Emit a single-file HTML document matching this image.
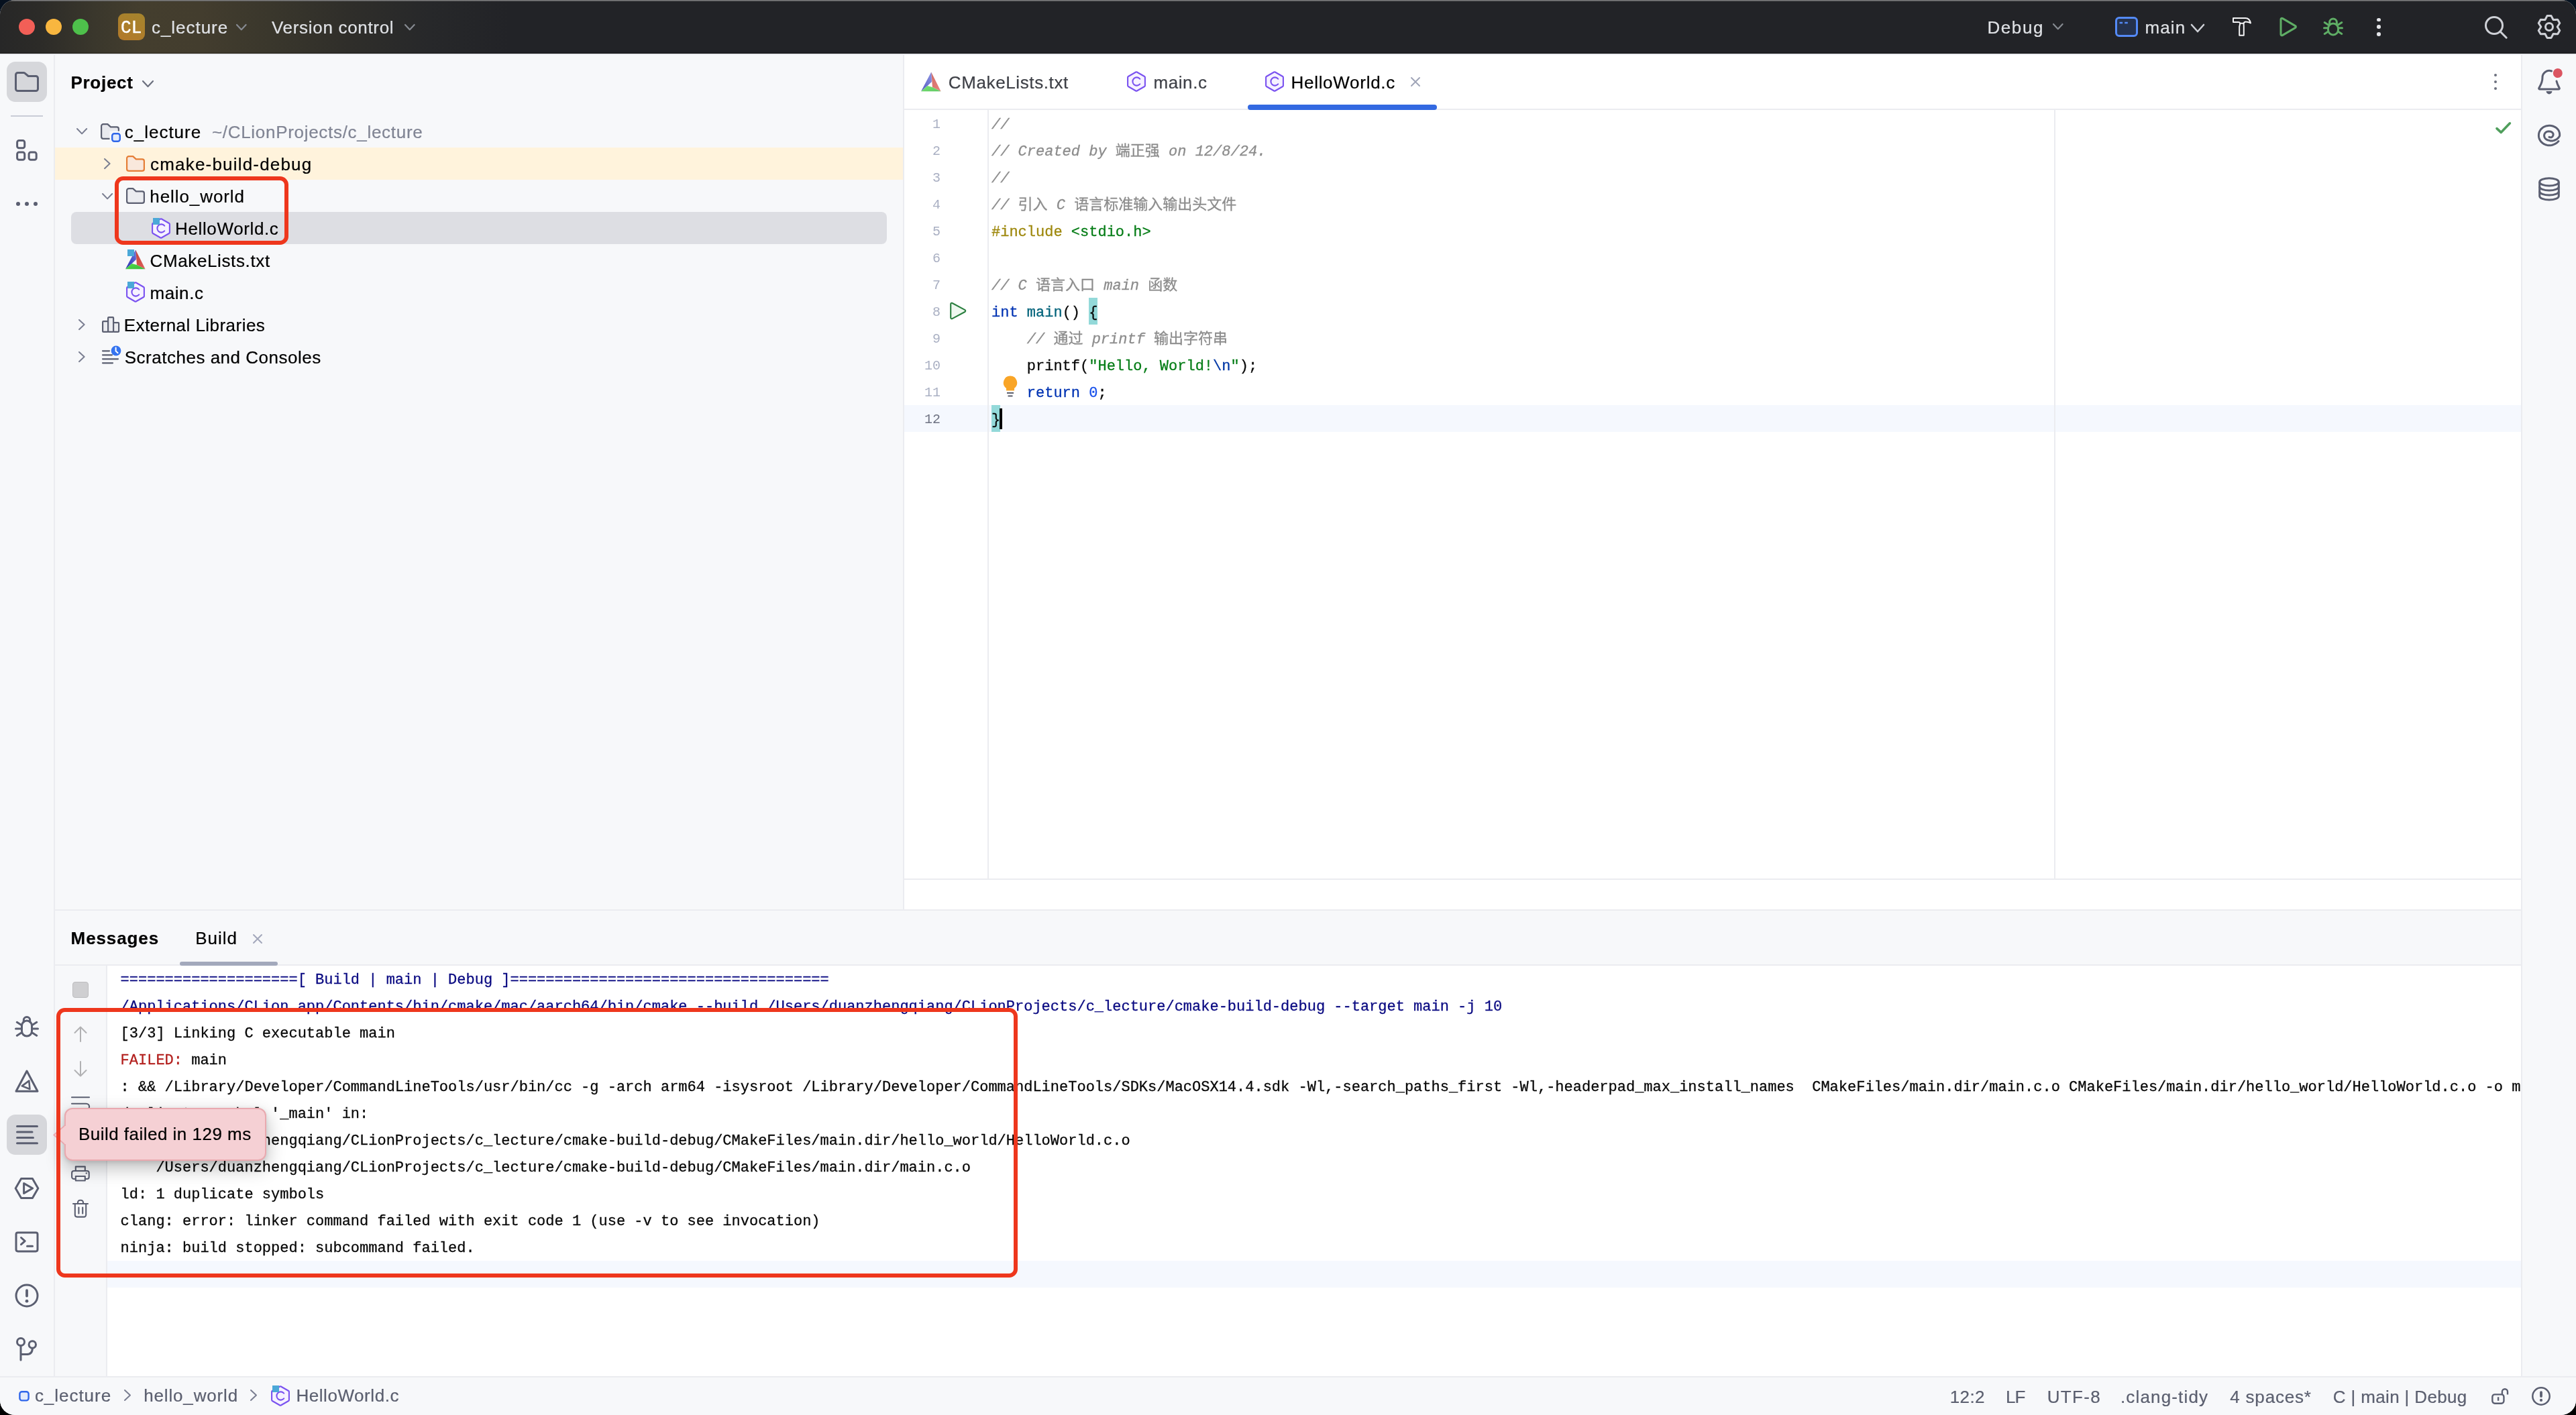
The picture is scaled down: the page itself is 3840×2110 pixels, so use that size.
<!DOCTYPE html>
<html lang="zh"><head><meta charset="utf-8"><title>c_lecture – HelloWorld.c</title>
<style>
html,body{margin:0;padding:0}
body{width:3840px;height:2110px;overflow:hidden;position:relative;background:linear-gradient(#06111f 0,#06111f 50%,#000 50%,#000 100%);font-family:"Liberation Sans","Noto Sans CJK SC",sans-serif}
#win{will-change:transform;position:absolute;left:0;top:0;width:3840px;height:2110px;border-radius:22px;overflow:hidden;background:#f7f8fa}
#win div,#win svg,#win span.t{position:absolute}
span.t{white-space:pre;line-height:1;-webkit-text-stroke:0.22px}
span.t.m,.m{-webkit-text-stroke:0.3px;font-family:"Liberation Mono","Noto Sans CJK SC",monospace;font-size:22px;white-space:pre;line-height:1}
.cj{font-family:"Noto Sans CJK SC","Liberation Mono",monospace;font-style:normal;line-height:0}
i.c{color:#8c8c8c}
</style></head><body><div id="win">
<svg width="0" height="0" style="left:0;top:0"><defs><linearGradient id="cmB" x1="0" y1="1" x2="1" y2="0"><stop offset="0" stop-color="#2a2cb0"/><stop offset="1" stop-color="#6a76dc"/></linearGradient><linearGradient id="cmR" x1="0" y1="0" x2="1" y2="1"><stop offset="0" stop-color="#c2453e"/><stop offset="1" stop-color="#e2605a"/></linearGradient><linearGradient id="cmG" x1="0" y1="0" x2="1" y2="1"><stop offset="0" stop-color="#52e04a"/><stop offset="1" stop-color="#36b83a"/></linearGradient></defs></svg>
<div style="left:0px;top:0px;width:3840px;height:80px;background:linear-gradient(90deg,#272727 0,#2c2b28 60px,#3a372c 140px,#443e2e 210px,#433d2e 300px,#3a372c 400px,#2f2e2a 520px,#27282a 640px,#222327 760px,#222327 100%);"></div>
<div style="left:0px;top:0px;width:3840px;height:2px;background:linear-gradient(#9a9a9a,#4a4a4c);opacity:.9"></div>
<div style="left:0px;top:78px;width:3840px;height:2px;background:linear-gradient(rgba(0,0,0,0),rgba(0,0,0,.35));"></div>
<div style="left:0px;top:80px;width:3840px;height:2px;background:#ebecf0;"></div>
<div style="left:28px;top:28px;width:24px;height:24px;background:#f25f57;border-radius:50%"></div>
<div style="left:68px;top:28px;width:24px;height:24px;background:#f8b63f;border-radius:50%"></div>
<div style="left:108px;top:28px;width:24px;height:24px;background:#4ec04b;border-radius:50%"></div>
<div style="left:176px;top:20px;width:40px;height:40px;background:linear-gradient(200deg,#a4842d,#b3792a);border-radius:9px"></div>
<span class="t" style="left:179.6px;top:28.3px;font-family:'Liberation Mono',monospace;font-size:28px;color:#fff;-webkit-text-stroke:0.4px #fff;transform:scaleX(.93);transform-origin:0 0">CL</span>
<span class="t " style="left:226.00px;top:27.79px;font-size:26px;color:#dfe1e5;letter-spacing:0.953px;">c_lecture</span>
<svg style="left:351.2px;top:34.699999999999996px;" width="17.6" height="11.2" viewBox="0 0 17.6 11.2" fill="none"><path d="M2 2 L8.8 9.2 L15.6 2" stroke="#868a91" stroke-width="2.2" stroke-linecap="round" stroke-linejoin="round"/></svg>
<span class="t " style="left:405.00px;top:27.79px;font-size:26px;color:#dfe1e5;letter-spacing:0.688px;">Version control</span>
<svg style="left:601.5px;top:34.699999999999996px;" width="17.6" height="11.2" viewBox="0 0 17.6 11.2" fill="none"><path d="M2 2 L8.8 9.2 L15.6 2" stroke="#868a91" stroke-width="2.2" stroke-linecap="round" stroke-linejoin="round"/></svg>
<span class="t " style="left:2962.38px;top:27.79px;font-size:26px;color:#dfe1e5;letter-spacing:1.606px;">Debug</span>
<svg style="left:3059.3999999999996px;top:34.4px;" width="17.6" height="11.2" viewBox="0 0 17.6 11.2" fill="none"><path d="M2 2 L8.8 9.2 L15.6 2" stroke="#868a91" stroke-width="2.2" stroke-linecap="round" stroke-linejoin="round"/></svg>
<svg style="left:3153px;top:25px;" width="34" height="30" viewBox="0 0 34 30" fill="none"><rect x="1.5" y="1.5" width="31" height="27" rx="4.5" fill="#25324d" stroke="#548af7" stroke-width="3"/><path d="M6.5 9 h4.6 M14.2 9 h4.6" stroke="#548af7" stroke-width="2.4"/></svg>
<span class="t " style="left:3197.38px;top:27.79px;font-size:26px;color:#dfe1e5;letter-spacing:1.125px;">main</span>
<svg style="left:3265.3px;top:35.0px;" width="22" height="14" viewBox="0 0 22 14" fill="none"><path d="M2 2 L11.0 12 L20 2" stroke="#ced0d6" stroke-width="2.6" stroke-linecap="round" stroke-linejoin="round"/></svg>
<svg style="left:3322px;top:20px;" width="40" height="40" viewBox="0 0 40 40" fill="none"><g stroke="#f4f4f6" stroke-width="2" stroke-linejoin="round" stroke-linecap="round"><path d="M7 7 H25.5 C29.8 7 32 10.2 33 14.4 C30.6 12.8 28.6 12.5 25.6 12.5 C24 12.5 23 13.4 22.6 14.8 H17.4 C17 13.6 16 13 14.6 13 C13 13 12.4 12.9 11 12.9 H7 Z"/><path d="M17.4 14.8 L16.2 19.8 V32.7 H22.8 V19.8 L22.6 14.8"/></g></svg>
<svg style="left:3390px;top:20px;" width="40" height="40" viewBox="0 0 40 40" fill="none"><path d="M10 8.8 a1.6 1.6 0 0 1 2.4 -1.4 l19.2 11.2 a1.6 1.6 0 0 1 0 2.8 l-19.2 11.2 a1.6 1.6 0 0 1 -2.4 -1.4 z" stroke="#5fad65" stroke-width="3" stroke-linejoin="round"/></svg>
<svg style="left:3458px;top:20px;" width="40" height="40" viewBox="0 0 40 40" fill="none"><g stroke="#5fad65" stroke-width="3" stroke-linecap="round"><path d="M12.5 24.5 v-2 a7.5 7.5 0 0 1 15 0 v2 a7.5 7.5 0 0 1 -15 0 z"/><path d="M14.6 16 v-2.6 a5.4 5.4 0 0 1 10.8 0 v2.6"/><path d="M6.5 21.8 h5.5 M28 21.8 h5.5 M7.2 13.6 l5 3.2 M32.8 13.6 l-5 3.2 M7.2 30.4 l5 -3.2 M32.8 30.4 l-5 -3.2"/></g></svg>
<div style="left:3543.2px;top:26.5px;width:5.6px;height:5.6px;background:#e4e5e9;border-radius:50%"></div>
<div style="left:3543.2px;top:37.2px;width:5.6px;height:5.6px;background:#e4e5e9;border-radius:50%"></div>
<div style="left:3543.2px;top:48.0px;width:5.6px;height:5.6px;background:#e4e5e9;border-radius:50%"></div>
<svg style="left:3700px;top:20px;" width="40" height="40" viewBox="0 0 40 40" fill="none"><circle cx="18" cy="18" r="12.5" stroke="#ced0d6" stroke-width="3"/><path d="M27 27 l9.2 9.2" stroke="#ced0d6" stroke-width="3" stroke-linecap="round"/></svg>
<svg style="left:3780px;top:20px;" width="40" height="40" viewBox="0 0 40 40" fill="none"><path d="M16.96 3.58 L23.04 3.58 L26.10 9.43 L32.70 9.15 L35.74 14.43 L32.20 20.00 L35.74 25.57 L32.70 30.85 L26.10 30.57 L23.04 36.42 L16.96 36.42 L13.90 30.57 L7.30 30.85 L4.26 25.57 L7.80 20.00 L4.26 14.43 L7.30 9.15 L13.90 9.43Z" stroke="#ced0d6" stroke-width="3" stroke-linejoin="round"/><circle cx="20" cy="20" r="5.5" stroke="#ced0d6" stroke-width="3"/></svg>
<div style="left:80px;top:82px;width:2px;height:1970px;background:#ebecf0;"></div>
<div style="left:1346px;top:82px;width:2px;height:1274px;background:#ebecf0;"></div>
<span class="t " style="left:105.38px;top:109.59px;font-size:26px;color:#000;letter-spacing:0.742px;font-weight:bold;">Project</span>
<svg style="left:210.5px;top:118.5px;" width="19" height="12" viewBox="0 0 19 12" fill="none"><path d="M2 2 L9.5 10 L17 2" stroke="#6c707e" stroke-width="2.2" stroke-linecap="round" stroke-linejoin="round"/></svg>
<div style="left:82px;top:220px;width:1264px;height:48px;background:#fff3dc;"></div>
<div style="left:106px;top:316px;width:1216px;height:48px;background:#dddee3;border-radius:8px"></div>
<svg style="left:112.9px;top:190.3px;" width="18.2" height="11.4" viewBox="0 0 18.2 11.4" fill="none"><path d="M2 2 L9.1 9.4 L16.2 2" stroke="#7a7e91" stroke-width="2" stroke-linecap="round" stroke-linejoin="round"/></svg>
<svg style="left:150px;top:184px;" width="32" height="30" viewBox="0 0 32 30" fill="none"><path d="M1.1 4 a2.9 2.9 0 0 1 2.9 -2.9 h6.4 l4.6 4.3 h9 a2.9 2.9 0 0 1 2.9 2.9 v11.7 a2.9 2.9 0 0 1 -2.9 2.9 h-20 a2.9 2.9 0 0 1 -2.9 -2.9 z" fill="#e8e9ee" stroke="#5b5f71" stroke-width="2.2" stroke-linejoin="round"/><rect x="13.5" y="11.5" width="19" height="19" fill="#f7f8fa"/><rect x="17.2" y="15.2" width="11.6" height="11.6" rx="3.2" fill="#e3ebfb" stroke="#2f66ea" stroke-width="2.4"/></svg>
<span class="t " style="left:185.80px;top:183.69px;font-size:26px;color:#000;letter-spacing:0.978px;">c_lecture</span>
<span class="t " style="left:315.88px;top:183.69px;font-size:26px;color:#818594;letter-spacing:0.702px;">~/CLionProjects/c_lecture</span>
<svg style="left:153.79999999999998px;top:235.0px;" width="11.6" height="18.2" viewBox="0 0 11.6 18.2" fill="none"><path d="M2 2 L9.6 9.1 L2 16.2" stroke="#7a7e91" stroke-width="2" stroke-linecap="round" stroke-linejoin="round"/></svg>
<svg style="left:188px;top:232px;" width="28" height="24" viewBox="0 0 28 24" fill="none"><path d="M1.1 4 a2.9 2.9 0 0 1 2.9 -2.9 h6.2 l4.6 4.3 h9.2 a2.9 2.9 0 0 1 2.9 2.9 v11.7 a2.9 2.9 0 0 1 -2.9 2.9 h-20 a2.9 2.9 0 0 1 -2.9 -2.9 z" fill="#f9e8dc" stroke="#e57e36" stroke-width="2.2" stroke-linejoin="round"/></svg>
<span class="t " style="left:224.00px;top:231.69px;font-size:26px;color:#000;letter-spacing:1.194px;">cmake-build-debug</span>
<svg style="left:150.9px;top:286.5px;" width="18.2" height="11.4" viewBox="0 0 18.2 11.4" fill="none"><path d="M2 2 L9.1 9.4 L16.2 2" stroke="#7a7e91" stroke-width="2" stroke-linecap="round" stroke-linejoin="round"/></svg>
<svg style="left:188px;top:280px;" width="28" height="24" viewBox="0 0 28 24" fill="none"><path d="M1.1 4 a2.9 2.9 0 0 1 2.9 -2.9 h6.2 l4.6 4.3 h9.2 a2.9 2.9 0 0 1 2.9 2.9 v11.7 a2.9 2.9 0 0 1 -2.9 2.9 h-20 a2.9 2.9 0 0 1 -2.9 -2.9 z" fill="#ebecf0" stroke="#5b5f71" stroke-width="2.2" stroke-linejoin="round"/></svg>
<span class="t " style="left:223.25px;top:279.69px;font-size:26px;color:#000;letter-spacing:0.925px;">hello_world</span>
<svg style="left:225.5px;top:324.5px;" width="28" height="31" viewBox="0 0 28 31" fill="none"><path d="M13.2 1.5 a1.6 1.6 0 0 1 1.6 0 L26.1 8 a1.6 1.6 0 0 1 .8 1.4 V21.6 a1.6 1.6 0 0 1 -.8 1.4 L14.8 29.5 a1.6 1.6 0 0 1 -1.6 0 L1.9 23 a1.6 1.6 0 0 1 -.8 -1.4 V9.4 a1.6 1.6 0 0 1 .8 -1.4 Z" fill="#f6f2ff" stroke="#7a52f0" stroke-width="2.1" stroke-linejoin="round"/><path d="M19.2 11.6 a6.1 6.1 0 1 0 0 7.8" stroke="#7a52f0" stroke-width="2.1" stroke-linecap="round"/><rect x="2" y="0" width="10" height="10" fill="#4ba8d8"/></svg>
<span class="t " style="left:261.07px;top:327.69px;font-size:26px;color:#000;letter-spacing:0.625px;">HelloWorld.c</span>
<svg style="left:187px;top:372.3px;" width="30" height="30" viewBox="0 0 30 30" fill="none"><path d="M15 0.7 L0 29.2 L9.6 20.9 L15.9 14.9 L15.7 1.5 Z" fill="url(#cmB)"/><path d="M15.3 0.7 L29.6 29.2 L16.9 23.1 L15.9 8 Z" fill="url(#cmR)"/><path d="M0 29.3 L29.6 29.3 L16.9 23.1 L9.6 20.9 Z" fill="url(#cmG)"/><rect x="3" y="0" width="10" height="10" fill="#4ba8d8"/></svg>
<span class="t " style="left:223.55px;top:375.69px;font-size:26px;color:#000;letter-spacing:0.621px;">CMakeLists.txt</span>
<svg style="left:188px;top:420.4px;" width="28" height="31" viewBox="0 0 28 31" fill="none"><path d="M13.2 1.5 a1.6 1.6 0 0 1 1.6 0 L26.1 8 a1.6 1.6 0 0 1 .8 1.4 V21.6 a1.6 1.6 0 0 1 -.8 1.4 L14.8 29.5 a1.6 1.6 0 0 1 -1.6 0 L1.9 23 a1.6 1.6 0 0 1 -.8 -1.4 V9.4 a1.6 1.6 0 0 1 .8 -1.4 Z" fill="#f6f2ff" stroke="#7a52f0" stroke-width="2.1" stroke-linejoin="round"/><path d="M19.2 11.6 a6.1 6.1 0 1 0 0 7.8" stroke="#7a52f0" stroke-width="2.1" stroke-linecap="round"/><rect x="2" y="0" width="10" height="10" fill="#4ba8d8"/></svg>
<span class="t " style="left:223.38px;top:423.69px;font-size:26px;color:#000;letter-spacing:0.605px;">main.c</span>
<svg style="left:115.60000000000001px;top:474.9px;" width="11.6" height="18.2" viewBox="0 0 11.6 18.2" fill="none"><path d="M2 2 L9.6 9.1 L2 16.2" stroke="#7a7e91" stroke-width="2" stroke-linecap="round" stroke-linejoin="round"/></svg>
<svg style="left:150px;top:470px;" width="30" height="28" viewBox="0 0 30 28" fill="none"><g stroke="#5b5f71" stroke-width="2.2" stroke-linejoin="round" fill="#ebecf0"><rect x="3.1" y="9.1" width="8" height="15.8" rx="1"/><rect x="11.1" y="3.1" width="8" height="21.8" rx="1"/><rect x="19.1" y="11.1" width="8" height="13.8" rx="1"/></g></svg>
<span class="t " style="left:184.68px;top:471.69px;font-size:26px;color:#000;letter-spacing:0.460px;">External Libraries</span>
<svg style="left:115.60000000000001px;top:522.9px;" width="11.6" height="18.2" viewBox="0 0 11.6 18.2" fill="none"><path d="M2 2 L9.6 9.1 L2 16.2" stroke="#7a7e91" stroke-width="2" stroke-linecap="round" stroke-linejoin="round"/></svg>
<svg style="left:150px;top:514px;" width="32" height="30" viewBox="0 0 32 30" fill="none"><g stroke="#5b5f71" stroke-width="2.2" stroke-linecap="round"><path d="M3 9.3 h10 M3 15.3 h14 M3 21.3 h23 M3 27.3 h15"/></g><circle cx="23" cy="9" r="7.4" fill="#3574f0"/><path d="M22.6 4.6 v5 l3 2.6" stroke="#fff" stroke-width="2" stroke-linecap="round" stroke-linejoin="round"/></svg>
<span class="t " style="left:185.68px;top:519.69px;font-size:26px;color:#000;letter-spacing:0.515px;">Scratches and Consoles</span>
<div style="left:1348px;top:82px;width:2411px;height:1274px;background:#fff;"></div>
<div style="left:1348px;top:162px;width:2411px;height:2px;background:#ebecf0;"></div>
<svg style="left:1373.2px;top:106.8px;opacity:.78;" width="30" height="30" viewBox="0 0 30 30" fill="none"><path d="M15 0.7 L0 29.2 L9.6 20.9 L15.9 14.9 L15.7 1.5 Z" fill="url(#cmB)"/><path d="M15.3 0.7 L29.6 29.2 L16.9 23.1 L15.9 8 Z" fill="url(#cmR)"/><path d="M0 29.3 L29.6 29.3 L16.9 23.1 L9.6 20.9 Z" fill="url(#cmG)"/></svg>
<span class="t " style="left:1413.75px;top:109.59px;font-size:26px;color:#3e4047;letter-spacing:0.621px;">CMakeLists.txt</span>
<svg style="left:1680px;top:106.3px;" width="28" height="31" viewBox="0 0 28 31" fill="none"><path d="M13.2 1.5 a1.6 1.6 0 0 1 1.6 0 L26.1 8 a1.6 1.6 0 0 1 .8 1.4 V21.6 a1.6 1.6 0 0 1 -.8 1.4 L14.8 29.5 a1.6 1.6 0 0 1 -1.6 0 L1.9 23 a1.6 1.6 0 0 1 -.8 -1.4 V9.4 a1.6 1.6 0 0 1 .8 -1.4 Z" fill="#f6f2ff" stroke="#7a52f0" stroke-width="2.1" stroke-linejoin="round"/><path d="M19.2 11.6 a6.1 6.1 0 1 0 0 7.8" stroke="#7a52f0" stroke-width="2.1" stroke-linecap="round"/></svg>
<span class="t " style="left:1719.38px;top:109.59px;font-size:26px;color:#3e4047;letter-spacing:0.605px;">main.c</span>
<svg style="left:1886px;top:106.3px;" width="28" height="31" viewBox="0 0 28 31" fill="none"><path d="M13.2 1.5 a1.6 1.6 0 0 1 1.6 0 L26.1 8 a1.6 1.6 0 0 1 .8 1.4 V21.6 a1.6 1.6 0 0 1 -.8 1.4 L14.8 29.5 a1.6 1.6 0 0 1 -1.6 0 L1.9 23 a1.6 1.6 0 0 1 -.8 -1.4 V9.4 a1.6 1.6 0 0 1 .8 -1.4 Z" fill="#f6f2ff" stroke="#7a52f0" stroke-width="2.1" stroke-linejoin="round"/><path d="M19.2 11.6 a6.1 6.1 0 1 0 0 7.8" stroke="#7a52f0" stroke-width="2.1" stroke-linecap="round"/></svg>
<span class="t " style="left:1924.47px;top:109.59px;font-size:26px;color:#000;letter-spacing:0.716px;">HelloWorld.c</span>
<svg style="left:2101px;top:113px;" width="18" height="18" viewBox="0 0 18 18" fill="none"><path d="M3 3 L15 15 M15 3 L3 15" stroke="#a0a5b8" stroke-width="2" stroke-linecap="round"/></svg>
<div style="left:1860px;top:156px;width:282.3px;height:8px;background:#3369e1;border-radius:4px"></div>
<div style="left:3717.9px;top:109.9px;width:4.2px;height:4.2px;background:#6c707e;border-radius:50%"></div>
<div style="left:3717.9px;top:119.9px;width:4.2px;height:4.2px;background:#6c707e;border-radius:50%"></div>
<div style="left:3717.9px;top:129.9px;width:4.2px;height:4.2px;background:#6c707e;border-radius:50%"></div>
<div style="left:1348px;top:604px;width:2411px;height:40px;background:#f5f8fe;"></div>
<div style="left:1472px;top:164px;width:2px;height:1146px;background:#ebecf0;"></div>
<div style="left:3062px;top:164px;width:2px;height:1146px;background:#ebecf0;"></div>
<div style="left:1348px;top:1310px;width:2411px;height:2px;background:#ebecf0;"></div>
<div style="left:1623px;top:444px;width:13.2px;height:40px;background:#93d9d9;"></div>
<div style="left:1478px;top:604px;width:13.2px;height:40px;background:#93d9d9;"></div>
<svg style="left:3716px;top:176px;" width="32" height="28" viewBox="0 0 32 28" fill="none"><path d="M6 15.6 L12.2 21.4 L25.4 7.8" stroke="#4f9e5c" stroke-width="3.6" stroke-linecap="round" stroke-linejoin="round"/></svg>
<span class="t m" style="left:1390.0px;top:175.67px;font-size:20px;color:#aab0c3;-webkit-text-stroke:0">1</span>
<span class="t m" style="left:1390.0px;top:215.67px;font-size:20px;color:#aab0c3;-webkit-text-stroke:0">2</span>
<span class="t m" style="left:1390.0px;top:255.67px;font-size:20px;color:#aab0c3;-webkit-text-stroke:0">3</span>
<span class="t m" style="left:1390.0px;top:295.67px;font-size:20px;color:#aab0c3;-webkit-text-stroke:0">4</span>
<span class="t m" style="left:1390.0px;top:335.67px;font-size:20px;color:#aab0c3;-webkit-text-stroke:0">5</span>
<span class="t m" style="left:1390.0px;top:375.67px;font-size:20px;color:#aab0c3;-webkit-text-stroke:0">6</span>
<span class="t m" style="left:1390.0px;top:415.67px;font-size:20px;color:#aab0c3;-webkit-text-stroke:0">7</span>
<span class="t m" style="left:1390.0px;top:455.67px;font-size:20px;color:#aab0c3;-webkit-text-stroke:0">8</span>
<span class="t m" style="left:1390.0px;top:495.67px;font-size:20px;color:#aab0c3;-webkit-text-stroke:0">9</span>
<span class="t m" style="left:1378.0px;top:535.67px;font-size:20px;color:#aab0c3;-webkit-text-stroke:0">10</span>
<span class="t m" style="left:1378.0px;top:575.67px;font-size:20px;color:#aab0c3;-webkit-text-stroke:0">11</span>
<span class="t m" style="left:1378.0px;top:615.67px;font-size:20px;color:#6e7282;-webkit-text-stroke:0">12</span>
<span class="t m" style="left:1478px;top:176.13px;font-size:22px;color:#8c8c8c;"><i>//</i></span>
<span class="t m" style="left:1478px;top:216.13px;font-size:22px;color:#8c8c8c;"><i>// Created by </i><span class="cj">端正强</span><i> on 12/8/24.</i></span>
<span class="t m" style="left:1478px;top:256.13px;font-size:22px;color:#8c8c8c;"><i>//</i></span>
<span class="t m" style="left:1478px;top:296.13px;font-size:22px;color:#8c8c8c;"><i>// </i><span class="cj">引入</span><i> C </i><span class="cj">语言标准输入输出头文件</span></span>
<span class="t m" style="left:1478px;top:336.13px;font-size:22px;color:#080808;"><span style="color:#9e880d">#include</span> <span style="color:#067d17">&lt;stdio.h&gt;</span></span>
<span class="t m" style="left:1478px;top:416.13px;font-size:22px;color:#8c8c8c;"><i>// C </i><span class="cj">语言入口</span><i> main </i><span class="cj">函数</span></span>
<span class="t m" style="left:1478px;top:456.13px;font-size:22px;color:#080808;"><span style="color:#0033b3">int</span> <span style="color:#00627a">main</span>() {</span>
<span class="t m" style="left:1478px;top:496.13px;font-size:22px;color:#080808;">    <span style="color:#8c8c8c"><i>// </i><span class="cj">通过</span><i> printf </i><span class="cj">输出字符串</span></span></span>
<span class="t m" style="left:1478px;top:536.13px;font-size:22px;color:#080808;">    printf(<span style="color:#067d17">"Hello, World!<span style="color:#0037a6">\n</span>"</span>);</span>
<span class="t m" style="left:1478px;top:576.13px;font-size:22px;color:#080808;">    <span style="color:#0033b3">return</span> <span style="color:#1750eb">0</span>;</span>
<span class="t m" style="left:1478px;top:616.13px;font-size:22px;color:#080808;">}</span>
<div style="left:1490.3px;top:609px;width:3.6px;height:31px;background:#000;"></div>
<svg style="left:1415.8px;top:450.4px;" width="26" height="28" viewBox="0 0 26 28" fill="none"><path d="M1.2 3.4 a1.6 1.6 0 0 1 2.4 -1.4 l18.8 10.2 a1.6 1.6 0 0 1 0 2.8 l-18.8 10.2 a1.6 1.6 0 0 1 -2.4 -1.4 z" fill="#eef8ef" stroke="#2a7f3f" stroke-width="2.1" stroke-linejoin="round"/></svg>
<svg style="left:1494px;top:559px;" width="24" height="34" viewBox="0 0 24 34" fill="none"><path d="M12 1.5 a10.2 10.2 0 0 1 6 18.4 v3.6 h-12 v-3.6 a10.2 10.2 0 0 1 6 -18.4 z" fill="#f9a527"/><path d="M7 27 h10 M8.5 31.5 h7" stroke="#5a5d6b" stroke-width="2.2"/></svg>
<div style="left:82px;top:1356px;width:3677px;height:2px;background:#ebecf0;"></div>
<div style="left:82px;top:1358px;width:3677px;height:80px;background:#f7f8fa;"></div>
<div style="left:82px;top:1438px;width:3677px;height:2px;background:#ebecf0;"></div>
<div style="left:160px;top:1440px;width:3599px;height:612px;background:#fff;"></div>
<div style="left:158px;top:1440px;width:2px;height:612px;background:#ebecf0;"></div>
<div style="left:160px;top:1880px;width:3599px;height:40px;background:#f5f8fe;"></div>
<span class="t " style="left:105.58px;top:1386.19px;font-size:26px;color:#000;letter-spacing:0.893px;font-weight:bold;">Messages</span>
<span class="t " style="left:291.18px;top:1386.19px;font-size:26px;color:#000;letter-spacing:0.994px;">Build</span>
<svg style="left:375px;top:1391.2px;" width="18" height="18" viewBox="0 0 18 18" fill="none"><path d="M3 3 L15 15 M15 3 L3 15" stroke="#a3a8bb" stroke-width="2" stroke-linecap="round"/></svg>
<div style="left:268px;top:1434px;width:146px;height:6px;background:#a3a9bc;border-radius:3px"></div>
<div style="left:108px;top:1464px;width:24px;height:24px;background:#cfcfd1;border-radius:4px;box-sizing:border-box;border:1.5px solid #bdbdbf"></div>
<svg style="left:108px;top:1528px;" width="24" height="28" viewBox="0 0 24 28" fill="none"><path d="M12 25 V3.5 M3.5 12 L12 3.5 L20.5 12" stroke="#b1b1b3" stroke-width="2" stroke-linecap="round" stroke-linejoin="round"/></svg>
<svg style="left:108px;top:1580px;" width="24" height="28" viewBox="0 0 24 28" fill="none"><path d="M12 3 V24.5 M3.5 16 L12 24.5 L20.5 16" stroke="#b1b1b3" stroke-width="2" stroke-linecap="round" stroke-linejoin="round"/></svg>
<svg style="left:104px;top:1626px;" width="32" height="32" viewBox="0 0 32 32" fill="none"><path d="M3 10.3 h26 M3 19.7 h21.5 a4.6 4.6 0 0 1 0 9.2 h-5 M3 29 h9" stroke="#5b5f71" stroke-width="2.1" stroke-linecap="round"/></svg>
<svg style="left:104px;top:1734px;" width="32" height="32" viewBox="0 0 32 32" fill="none"><g stroke="#5b5f71" stroke-width="2.1" stroke-linejoin="round"><path d="M8.8 12 V5.6 h14 V12"/><rect x="3.1" y="12" width="25.6" height="12" rx="3"/><rect x="8.8" y="20" width="14" height="6.5" fill="#f7f8fa"/></g><circle cx="24.8" cy="15.4" r="1.2" fill="#5b5f71"/></svg>
<svg style="left:104px;top:1785px;" width="32" height="34" viewBox="0 0 32 34" fill="none"><g stroke="#5b5f71" stroke-width="2.1" stroke-linecap="round" stroke-linejoin="round"><path d="M5 10 h22 M12 9.6 V8 a3.2 3.2 0 0 1 3.2 -3.2 h1.6 a3.2 3.2 0 0 1 3.2 3.2 v1.6 M7.8 10.4 v16.2 a3 3 0 0 0 3 3 h10.4 a3 3 0 0 0 3 -3 V10.4 M13.4 15.6 v9 M19.2 15.6 v9"/></g></svg>
<span class="t m" style="left:179.6px;top:1451.13px;font-size:22px;color:#0a0a82;">====================[ Build | main | Debug ]====================================</span>
<span class="t m" style="left:179.6px;top:1491.13px;font-size:22px;color:#0a0a82;">/Applications/CLion.app/Contents/bin/cmake/mac/aarch64/bin/cmake --build /Users/duanzhengqiang/CLionProjects/c_lecture/cmake-build-debug --target main -j 10</span>
<span class="t m" style="left:179.6px;top:1531.13px;font-size:22px;color:#080808;">[3/3] Linking C executable main</span>
<span class="t m" style="left:179.6px;top:1571.13px;font-size:22px;color:#080808;"><span style="color:#b3201e">FAILED: </span>main</span>
<div style="left:179.6px;top:1604px;width:3577.4px;height:34px;overflow:hidden"><span class="t m" style="left:0;top:7.13px;color:#080808">: &amp;&amp; /Library/Developer/CommandLineTools/usr/bin/cc -g -arch arm64 -isysroot /Library/Developer/CommandLineTools/SDKs/MacOSX14.4.sdk -Wl,-search_paths_first -Wl,-headerpad_max_install_names  CMakeFiles/main.dir/main.c.o CMakeFiles/main.dir/hello_world/HelloWorld.c.o -o main  &amp;&amp; :</span></div>
<span class="t m" style="left:179.6px;top:1651.13px;font-size:22px;color:#080808;">duplicate symbol '_main' in:</span>
<span class="t m" style="left:179.6px;top:1691.13px;font-size:22px;color:#080808;">    /Users/duanzhengqiang/CLionProjects/c_lecture/cmake-build-debug/CMakeFiles/main.dir/hello_world/HelloWorld.c.o</span>
<span class="t m" style="left:179.6px;top:1731.13px;font-size:22px;color:#080808;">    /Users/duanzhengqiang/CLionProjects/c_lecture/cmake-build-debug/CMakeFiles/main.dir/main.c.o</span>
<span class="t m" style="left:179.6px;top:1771.13px;font-size:22px;color:#080808;">ld: 1 duplicate symbols</span>
<span class="t m" style="left:179.6px;top:1811.13px;font-size:22px;color:#080808;">clang: error: linker command failed with exit code 1 (use -v to see invocation)</span>
<span class="t m" style="left:179.6px;top:1851.13px;font-size:22px;color:#080808;">ninja: build stopped: subcommand failed.</span>
<div style="left:3758px;top:82px;width:2px;height:1970px;background:#ebecf0;"></div>
<div style="left:3760px;top:82px;width:80px;height:1970px;background:#f7f8fa;"></div>
<div style="left:10px;top:92px;width:60px;height:60px;background:#d6d7db;border-radius:13px"></div>
<svg style="left:20px;top:102px;" width="40" height="40" viewBox="0 0 40 40" fill="none"><path d="M3.5 9.5 a3 3 0 0 1 3 -3 h8.6 a3 3 0 0 1 1.9 .7 l5.2 4.3 h11.3 a3 3 0 0 1 3 3 v16 a3 3 0 0 1 -3 3 h-27 a3 3 0 0 1 -3 -3 z" stroke="#5b5f71" stroke-width="3" stroke-linejoin="round"/></svg>
<div style="left:16px;top:172px;width:48px;height:2px;background:#c9ccd6;"></div>
<svg style="left:20px;top:204px;" width="40" height="40" viewBox="0 0 40 40" fill="none"><g stroke="#5b5f71" stroke-width="3"><rect x="5.6" y="5.6" width="11.1" height="11.1" rx="2.8"/><rect x="5.6" y="23.1" width="11.1" height="11.1" rx="2.8"/><rect x="23.1" y="23.1" width="11.1" height="11.1" rx="2.8"/></g></svg>
<div style="left:24px;top:301px;width:6px;height:6px;background:#5b5f71;border-radius:50%"></div>
<div style="left:37px;top:301px;width:6px;height:6px;background:#5b5f71;border-radius:50%"></div>
<div style="left:50px;top:301px;width:6px;height:6px;background:#5b5f71;border-radius:50%"></div>
<svg style="left:20px;top:1512px;" width="40" height="40" viewBox="0 0 40 40" fill="none"><g stroke="#5b5f71" stroke-width="3" stroke-linecap="round"><path d="M12.5 25.6 v-8 a7.5 7.5 0 0 1 15 0 v8 a7.5 7.5 0 0 1 -15 0 z"/><path d="M15.3 12 v-2.8 a4.7 4.7 0 0 1 9.4 0 v2.8"/><path d="M3.5 22 h8 M28.5 22 h8 M5.3 12.3 l6.2 4 M34.7 12.3 l-6.2 4 M5.3 32.3 l6.2 -4 M34.7 32.3 l-6.2 -4"/></g></svg>
<svg style="left:20px;top:1592px;" width="40" height="40" viewBox="0 0 40 40" fill="none"><g stroke="#5b5f71" stroke-width="3" stroke-linejoin="round"><path d="M20 5 L36 35.2 H4 Z"/><path d="M23.3 19.6 L12.8 27.4 L24.4 32 Z" stroke-width="2.6"/></g></svg>
<div style="left:10px;top:1662px;width:60px;height:60px;background:#d6d7db;border-radius:13px"></div>
<svg style="left:20px;top:1672px;" width="40" height="40" viewBox="0 0 40 40" fill="none"><path d="M5.5 7.5 h30 M5.5 16 h22.5 M5.5 24.4 h24 M5.5 32.7 h30" stroke="#5b5f71" stroke-width="3" stroke-linecap="round"/></svg>
<svg style="left:20px;top:1752px;" width="40" height="40" viewBox="0 0 40 40" fill="none"><g stroke="#5b5f71" stroke-width="3" stroke-linejoin="round"><path d="M3.2 20 L11.6 5.6 H28.4 L36.8 20 L28.4 34.4 H11.6 Z"/><path d="M15.6 12.6 L28.6 20 L15.6 27.4 Z"/></g></svg>
<svg style="left:20px;top:1832px;" width="40" height="40" viewBox="0 0 40 40" fill="none"><g stroke="#5b5f71" stroke-width="3" stroke-linecap="round" stroke-linejoin="round"><rect x="4" y="5.9" width="32" height="28" rx="2.6"/><path d="M11.5 13.5 L17.2 18.6 L11.5 23.7 M20.5 26.2 h8"/></g></svg>
<svg style="left:20px;top:1912px;" width="40" height="40" viewBox="0 0 40 40" fill="none"><g stroke="#5b5f71" stroke-width="3" stroke-linecap="round"><circle cx="20" cy="20" r="16"/><path d="M20 12.2 v8.4" stroke-width="3.8"/></g><circle cx="20" cy="28.2" r="2.4" fill="#5b5f71"/></svg>
<svg style="left:20px;top:1992px;" width="40" height="40" viewBox="0 0 40 40" fill="none"><g stroke="#5b5f71" stroke-width="3" stroke-linecap="round"><circle cx="11" cy="9" r="5.5"/><circle cx="28.3" cy="13" r="5.2"/><path d="M11 14.8 V36 M28.3 18.4 c0 6 -3 9.2 -9 9.2 H11"/></g></svg>
<svg style="left:3780px;top:100px;" width="40" height="44" viewBox="0 0 40 44" fill="none"><g stroke="#5b5f71" stroke-width="3" stroke-linecap="round" stroke-linejoin="round"><path d="M23.5 6 a10 10 0 0 0 -13.5 9.4 c0 8 -3.6 12.6 -5.2 16 a1.2 1.2 0 0 0 1.1 1.7 h28.2 a1.2 1.2 0 0 0 1.1 -1.7 c-1 -2.2 -3 -5.4 -4.2 -10.4"/></g><path d="M15.6 36 h8.8 a4.4 4.4 0 0 1 -8.8 0 z" fill="#5b5f71"/><circle cx="32.8" cy="9" r="7" fill="#db5561"/></svg>
<svg style="left:3780px;top:181px;" width="40" height="40" viewBox="0 0 40 40" fill="none"><path d="M33.93 29.57 L32.74 30.80 L31.43 31.90 L30.01 32.86 L28.54 33.71 L26.99 34.44 L25.37 35.01 L23.70 35.42 L22.00 35.66 L20.29 35.74 L18.57 35.65 L16.89 35.40 L15.24 34.98 L13.65 34.41 L12.14 33.68 L10.74 32.80 L9.44 31.79 L8.28 30.67 L7.25 29.44 L6.36 28.12 L5.64 26.73 L5.07 25.28 L4.67 23.79 L4.45 22.28 L4.39 20.75 L4.48 19.24 L4.73 17.74 L5.15 16.28 L5.73 14.87 L6.47 13.52 L7.35 12.26 L8.36 11.09 L9.50 10.03 L10.75 9.09 L12.10 8.27 L13.53 7.59 L15.02 7.06 L16.57 6.67 L18.14 6.44 L19.73 6.36 L21.33 6.36 L22.93 6.49 L24.51 6.78 L26.06 7.23 L27.56 7.82 L28.99 8.56 L30.33 9.45 L31.57 10.46 L32.70 11.60 L33.70 12.84 L34.45 14.23 L35.01 15.69 L35.40 17.19 L35.62 18.72 L35.67 20.25 L35.54 21.76 L34.71 23.16 L33.74 24.41 L32.66 25.50 L31.49 26.42 L30.26 27.18 L28.99 27.77 L27.75 28.23 L26.59 28.63 L25.43 28.90 L24.28 29.03 L23.16 29.04 L22.09 28.92 L21.08 28.70 L20.15 28.37 L19.27 28.23 L18.42 28.06 L17.60 27.80 L16.82 27.47 L16.08 27.07 L15.41 26.60 L14.79 26.08 L14.24 25.50 L13.76 24.87 L13.36 24.21 L13.04 23.52 L12.80 22.80 L12.65 22.08 L12.58 21.35 L12.59 20.62 L12.71 19.91 L12.90 19.22 L13.18 18.56 L13.52 17.94 L13.92 17.37 L14.38 16.84 L14.90 16.37 L15.45 15.96 L16.04 15.62 L16.66 15.33 L17.30 15.12 L17.95 14.96 L18.60 14.88 L19.26 14.86 L19.90 14.91 L20.53 14.91 L21.16 14.97 L21.78 15.08 L22.40 15.25 L22.99 15.48 L23.56 15.78 L24.09 16.12 L24.58 16.52 L25.03 16.97 L25.43 17.46 L25.77 18.00 L26.03 18.57 L26.08 19.20 L26.05 19.81 L25.96 20.40 L25.79 20.97 L25.57 21.51 L25.29 22.01 L24.97 22.46 L24.60 22.87 L24.19 23.23 L23.74 23.53 L23.22 23.71 L22.70 23.83 L22.18 23.88 L21.69 23.87 L21.22 23.81 L20.79 23.69 L20.40 23.53 L20.05 23.33" stroke="#5b5f71" stroke-width="3" stroke-linecap="round" stroke-linejoin="round"/></svg>
<svg style="left:3780px;top:262px;" width="40" height="40" viewBox="0 0 40 40" fill="none"><g stroke="#5b5f71" stroke-width="3"><ellipse cx="20" cy="9.4" rx="14.3" ry="5.6"/><path d="M5.7 9.4 V30.4 c0 3.1 6.4 5.6 14.3 5.6 s14.3 -2.5 14.3 -5.6 V9.4"/><path d="M5.7 16.4 c0 3.1 6.4 5.6 14.3 5.6 s14.3 -2.5 14.3 -5.6 M5.7 23.4 c0 3.1 6.4 5.6 14.3 5.6 s14.3 -2.5 14.3 -5.6"/></g></svg>
<div style="left:0px;top:2052px;width:3840px;height:2px;background:#ebecf0;"></div>
<div style="left:0px;top:2054px;width:3840px;height:56px;background:#f7f8fa;"></div>
<svg style="left:27px;top:2073px;" width="18" height="18" viewBox="0 0 18 18" fill="none"><rect x="2.4" y="2.2" width="13.2" height="13.2" rx="3.4" fill="#e3ebfb" stroke="#2f66ea" stroke-width="2.4"/></svg>
<span class="t " style="left:51.90px;top:2067.99px;font-size:26px;color:#5c6070;letter-spacing:0.966px;">c_lecture</span>
<svg style="left:183.6px;top:2070.7px;" width="12" height="19" viewBox="0 0 12 19" fill="none"><path d="M2 2 L10 9.5 L2 17" stroke="#7a7e91" stroke-width="2" stroke-linecap="round" stroke-linejoin="round"/></svg>
<span class="t " style="left:214.25px;top:2067.99px;font-size:26px;color:#5c6070;letter-spacing:0.835px;">hello_world</span>
<svg style="left:371.6px;top:2070.7px;" width="12" height="19" viewBox="0 0 12 19" fill="none"><path d="M2 2 L10 9.5 L2 17" stroke="#7a7e91" stroke-width="2" stroke-linecap="round" stroke-linejoin="round"/></svg>
<svg style="left:404px;top:2065.6px;" width="28" height="31" viewBox="0 0 28 31" fill="none"><path d="M13.2 1.5 a1.6 1.6 0 0 1 1.6 0 L26.1 8 a1.6 1.6 0 0 1 .8 1.4 V21.6 a1.6 1.6 0 0 1 -.8 1.4 L14.8 29.5 a1.6 1.6 0 0 1 -1.6 0 L1.9 23 a1.6 1.6 0 0 1 -.8 -1.4 V9.4 a1.6 1.6 0 0 1 .8 -1.4 Z" fill="#f6f2ff" stroke="#7a52f0" stroke-width="2.1" stroke-linejoin="round"/><path d="M19.2 11.6 a6.1 6.1 0 1 0 0 7.8" stroke="#7a52f0" stroke-width="2.1" stroke-linecap="round"/><rect x="2" y="0" width="10" height="10" fill="#4ba8d8"/></svg>
<span class="t " style="left:441.38px;top:2067.99px;font-size:26px;color:#5c6070;letter-spacing:0.561px;">HelloWorld.c</span>
<span class="t " style="left:2906.82px;top:2069.59px;font-size:26px;color:#5c6070;letter-spacing:0.333px;">12:2</span>
<span class="t " style="left:2989.88px;top:2069.59px;font-size:26px;color:#5c6070;letter-spacing:-0.750px;">LF</span>
<span class="t " style="left:3051.80px;top:2069.59px;font-size:26px;color:#5c6070;letter-spacing:1.294px;">UTF-8</span>
<span class="t " style="left:3160.93px;top:2069.59px;font-size:26px;color:#5c6070;letter-spacing:1.158px;">.clang-tidy</span>
<span class="t " style="left:3324.20px;top:2069.59px;font-size:26px;color:#5c6070;letter-spacing:0.828px;">4 spaces*</span>
<span class="t " style="left:3477.75px;top:2069.59px;font-size:26px;color:#5c6070;letter-spacing:0.362px;">C | main | Debug</span>
<svg style="left:3712px;top:2066px;" width="32" height="32" viewBox="0 0 32 32" fill="none"><g stroke="#5b5f71" stroke-width="2.4"><rect x="3.35" y="13.4" width="17.1" height="13.3" rx="3.6"/><path d="M17.9 13.2 V9.25 a4.05 4.05 0 0 1 8.1 0 V13.6 M12.1 17.2 v5.6"/></g></svg>
<svg style="left:3772px;top:2066px;" width="32" height="32" viewBox="0 0 32 32" fill="none"><g stroke="#5b5f71" stroke-linecap="round"><circle cx="16" cy="16" r="12.7" stroke-width="2.5"/><path d="M16 10.2 v5.8" stroke-width="3.8"/></g><circle cx="16" cy="21.9" r="2.1" fill="#5b5f71"/></svg>
<div style="left:95.7px;top:1652px;width:301.7px;height:78.6px;background:#f5d0d4;border:2px solid #e9a9af;border-radius:12px;box-sizing:border-box;box-shadow:0 10px 28px rgba(0,0,0,.28),0 2px 6px rgba(0,0,0,.10)"></div>
<svg style="left:78px;top:1676px;" width="20" height="34" viewBox="0 0 20 34" fill="none"><path d="M19 2 L2.2 16.4 L19 31" fill="#f5d0d4" stroke="#e9a9af" stroke-width="1.8" stroke-linejoin="round"/><rect x="18.4" y="3" width="2" height="27" fill="#f5d0d4"/></svg>
<span class="t " style="left:116.88px;top:1677.99px;font-size:26px;color:#000;letter-spacing:0.485px;">Build failed in 129 ms</span>
<div style="left:171.3px;top:263px;width:259.2px;height:102px;background:transparent;box-sizing:border-box;border:6.2px solid #ee371d;border-radius:12.5px"></div>
<div style="left:84.4px;top:1503px;width:1432.2px;height:402px;background:transparent;box-sizing:border-box;border:6.2px solid #ee371d;border-radius:12.5px"></div>
</div></body></html>
